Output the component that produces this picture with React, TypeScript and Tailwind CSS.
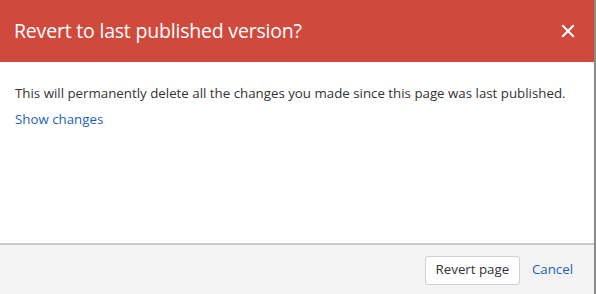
export default function App() {
  return (
    <div className="h-[294px] w-[596px] overflow-hidden bg-white font-['Open_Sans',sans-serif]">
      <div className="flex h-full w-[596px] flex-col border-r-2 border-[#8a8a8a] bg-white">
        {/* Header */}
        <div className="flex h-[62px] shrink-0 items-center justify-between bg-[#cf4a3d] pl-[14px] pr-[19px]">
          <h2 className="text-[19.5px] leading-none tracking-[-0.2px] text-white">
            Revert to last published version?
          </h2>
          <button className="text-white" title="Close">
            <svg width="14" height="14" viewBox="0 0 14 14" fill="none" stroke="white" strokeWidth="2" strokeLinecap="square">
              <path d="M2 2 L12 12 M12 2 L2 12" />
            </svg>
          </button>
        </div>

        {/* Body */}
        <div className="flex-1 px-[15px] pt-[22px] text-[13.3px]">
          <p className="leading-[18px] text-[#333]">
            This will permanently delete all the changes you made since this page was last published.
          </p>
          <a className="mt-[8px] block leading-[18px] text-[#1d5fbf]">Show changes</a>
        </div>

        {/* Footer */}
        <div className="flex h-[51px] shrink-0 items-center justify-end gap-[12px] border-t-2 border-[#cacaca] bg-[#f3f3f3] pr-[21px] pt-[1px]">
          <button className="h-[29px] w-[95px] rounded-[3px] border border-[#d0d0d0] bg-white text-[13.3px] text-[#333]">
            Revert page
          </button>
          <a className="text-[13.3px] text-[#1d5fbf]">Cancel</a>
        </div>
      </div>
    </div>
  )
}
